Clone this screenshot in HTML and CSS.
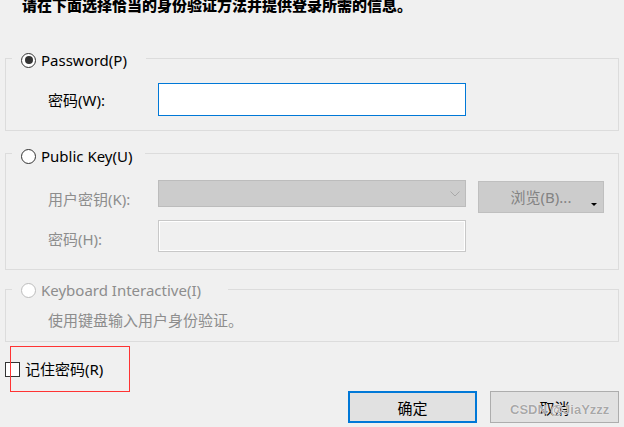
FILE: index.html
```html
<!DOCTYPE html>
<html lang="zh-CN">
<head>
<meta charset="utf-8">
<title>身份验证</title>
<link rel="stylesheet" href="styles.css">
</head>
<body>
<div class="dialog">
  <div class="header">请在下面选择恰当的身份验证方法并提供登录所需的信息。</div>

  <div class="group g1">
    <div class="legend lg1"><span class="radio checked"></span><span class="ltext">Password(P)</span></div>
    <div class="row r1">
      <span class="lbl">密码(W):</span>
      <div class="field focus"></div>
    </div>
  </div>

  <div class="group g2">
    <div class="legend lg2"><span class="radio"></span><span class="ltext">Public Key(U)</span></div>
    <div class="grid">
      <span class="lbl dis low">用户密钥(K):</span>
      <div class="combo">
        <svg class="chev" width="10" height="6" viewBox="0 0 10 6"><path d="M0.5 0.5 L5 5 L9.5 0.5" fill="none" stroke="#a9a9a9" stroke-width="1"/></svg>
      </div>
      <div class="browse">浏览(B)...<span class="tri"></span></div>
      <span class="lbl dis low">密码(H):</span>
      <div class="field disabled"></div>
    </div>
  </div>

  <div class="group g3">
    <div class="legend lg3"><span class="radio off"></span><span class="ltext dis">Keyboard Interactive(I)</span></div>
    <div class="desc dis">使用键盘输入用户身份验证。</div>
  </div>

  <div class="check-row">
    <span class="checkbox"></span><span class="ctext">记住密码(R)</span>
  </div>

  <div class="buttons">
    <div class="btn primary">确定</div>
    <div class="btn">取消</div>
  </div>

  <div class="annot"></div>
  <div class="watermark">CSDN @JiaYzzz</div>
</div>
</body>
</html>
```
FILE: styles.css
```css
html, body {
  margin: 0;
  padding: 0;
  background: #f0f0f0;
}
body {
  width: 624px;
  height: 427px;
  overflow: hidden;
  font-family: "Noto Sans", "Noto Sans CJK SC", sans-serif;
  font-size: 15px;
  color: #000;
}
.dialog {
  position: relative;
  width: 624px;
  height: 427px;
}
.header {
  padding-left: 22px;
  height: 10px;
  line-height: 10px;
  font-weight: 900;
  white-space: nowrap;
  font-family: "Noto Sans CJK SC", sans-serif;
}
.group {
  margin-left: 5px;
  width: 614px;
  box-sizing: border-box;
  border: 1px solid #dcdcdc;
}
.g1 { margin-top: 48px; padding-bottom: 14px; }
.g2 { margin-top: 22px; padding-bottom: 17px; }
.g3 { margin-top: 19px; padding-bottom: 11px; }

.legend {
  display: flex;
  align-items: center;
  width: fit-content;
  height: 20px;
  margin-left: 6px;
  padding-left: 9px;
  background: #f0f0f0;
}
.lg1 { margin-top: -9px; padding-right: 19px; }
.lg2 { margin-top: -8px; padding-right: 13px; }
.lg3 { margin-top: -10px; padding-right: 27px; }
.ltext { margin-left: 5px; line-height: 20px; white-space: nowrap; }

.radio {
  width: 15px;
  height: 15px;
  box-sizing: border-box;
  border: 1px solid #333;
  border-radius: 50%;
  background: #fff;
  display: flex;
  align-items: center;
  justify-content: center;
}
.radio.checked::after {
  content: "";
  width: 8px;
  height: 8px;
  border-radius: 50%;
  background: #333;
}
.radio.off { border-color: #bcbcbc; }

.dis { color: #8d8d8d; }

.row {
  display: flex;
  align-items: center;
  padding-left: 42px;
}
.r1 { margin-top: 13px; }
.lbl {
  width: 110px;
  line-height: 20px;
  white-space: nowrap;
}
.low { padding-top: 9px; width: auto; }

.field {
  width: 308px;
  box-sizing: border-box;
}
.field.focus {
  height: 33px;
  background: #fff;
  border: 1px solid #0078d7;
}
.field.disabled {
  height: 32px;
  background: #f0f0f0;
  border: 1px solid #c8c8c8;
  box-shadow: inset 0 0 0 1px #fff;
}

.grid {
  display: grid;
  grid-template-columns: 98px 308px 126px;
  column-gap: 12px;
  row-gap: 7px;
  align-items: start;
  padding-left: 42px;
  margin-top: 14px;
}
.combo {
  height: 27px;
  box-sizing: border-box;
  background: #cccccc;
  border: 1px solid #bcbcbc;
  display: flex;
  align-items: center;
  justify-content: flex-end;
  padding-right: 5px;
}
.chev { display: block; }
.browse {
  position: relative;
  margin-top: 1px;
  height: 32px;
  box-sizing: border-box;
  background: #cccccc;
  border: 1px solid #bfbfbf;
  color: #838383;
  display: flex;
  align-items: center;
  justify-content: center;
  line-height: 20px;
}
.tri {
  position: absolute;
  right: 6px;
  bottom: 6px;
  width: 0;
  height: 0;
  border-left: 3px solid transparent;
  border-right: 3px solid transparent;
  border-top: 3px solid #000;
}

.desc {
  margin-top: 10px;
  padding-left: 42px;
  line-height: 20px;
  white-space: nowrap;
}

.check-row {
  display: flex;
  align-items: center;
  margin-top: 17px;
  padding-left: 5px;
  height: 20px;
}
.checkbox {
  width: 15px;
  height: 15px;
  box-sizing: border-box;
  border: 1px solid #333;
  background: #fff;
}
.ctext { margin-left: 5px; line-height: 20px; }

.buttons {
  display: flex;
  justify-content: flex-end;
  gap: 13px;
  padding-right: 5px;
  margin-top: 12px;
}
.btn {
  width: 129px;
  height: 32px;
  box-sizing: border-box;
  background: #e1e1e1;
  border: 1px solid #adadad;
  display: flex;
  align-items: center;
  justify-content: center;
}
.btn.primary { border: 2px solid #0078d7; }

.annot {
  position: absolute;
  left: 10px;
  top: 346px;
  width: 120px;
  height: 46px;
  box-sizing: border-box;
  border: 1px solid #f33;
}
.watermark {
  position: absolute;
  left: 510px;
  top: 402px;
  font-family: "Liberation Sans", sans-serif;
  font-size: 13px;
  font-weight: bold;
  color: #a8a8a8;
  text-shadow: 0 0 1px #fff, 0 0 1px #fff;
  white-space: nowrap;
}
```
